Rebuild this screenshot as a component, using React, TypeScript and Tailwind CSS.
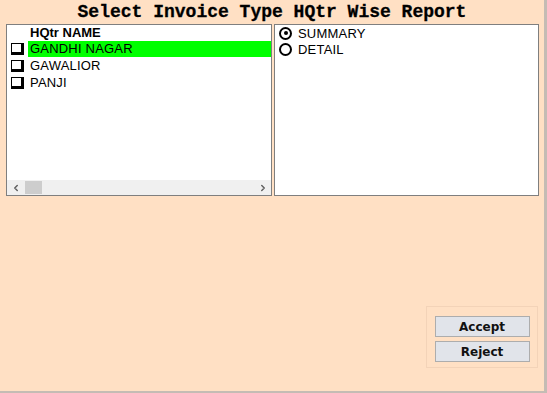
import { ChevronLeft, ChevronRight } from 'lucide-react';

const hqtrs = ['GANDHI NAGAR', 'GAWALIOR', 'PANJI'];

function Check() {
  return (
    <span className="ml-[4px] mr-[4px] box-border h-[12px] w-[13px] shrink-0 border border-b-[3px] border-r-[3px] border-black bg-white" />
  );
}

function Radio({ checked }: { checked: boolean }) {
  return (
    <span className="ml-[4px] mr-[6px] flex h-[13px] w-[13px] shrink-0 items-center justify-center rounded-full border-[2.5px] border-black bg-white">
      {checked && <span className="h-[4px] w-[4px] rounded-full bg-black" />}
    </span>
  );
}

export default function App() {
  return (
    <div className="flex h-[393px] w-[547px] flex-col overflow-hidden border-b-2 border-r-[3px] border-[#c4bcb4] bg-[#ffe0c4] font-['Liberation_Sans',Arial,sans-serif]">
      <h1 className="h-[24px] pt-[1px] text-center font-['Liberation_Mono','Courier_New',monospace] text-[18px] font-bold leading-[22px] text-black [-webkit-text-stroke:0.3px_black]">
        Select Invoice Type HQtr Wise Report
      </h1>
      <div className="flex h-[172px] gap-[2px] pl-[6px]">
        <div className="flex w-[266px] flex-col border border-[#7f7f7f] bg-white">
          <div className="h-[15px] pl-[23px] text-[13px] font-bold leading-[15px] text-black">HQtr NAME</div>
          <div className="flex-1">
            {hqtrs.map((name, i) => (
              <div key={name} className="flex h-[17px] items-center">
                <Check />
                <span
                  className={
                    'flex h-[16px] flex-1 items-center pl-[2px] text-[13px] leading-none tracking-[0.2px] text-black ' +
                    (i === 0 ? 'bg-[#00ff00]' : '')
                  }
                >
                  {name}
                </span>
              </div>
            ))}
          </div>
          <div className="flex h-[15px] items-center bg-[#f0f0f0] pr-[3px]">
            <ChevronLeft className="ml-[4px] h-[10px] w-[10px] text-[#606060]" strokeWidth={3.5} />
            <span className="ml-[4px] h-[13px] w-[17px] bg-[#cdcdcd]" />
            <span className="flex-1" />
            <ChevronRight className="h-[10px] w-[10px] text-[#606060]" strokeWidth={3.5} />
          </div>
        </div>
        <div className="w-[265px] border border-[#7f7f7f] bg-white">
          <div className="flex h-[16px] items-center">
            <Radio checked />
            <span className="text-[13px] leading-none tracking-[0.2px] text-black">SUMMARY</span>
          </div>
          <div className="flex h-[16px] items-center">
            <Radio checked={false} />
            <span className="text-[13px] leading-none tracking-[0.2px] text-black">DETAIL</span>
          </div>
        </div>
      </div>
      <div className="flex flex-1 justify-end pr-[6px] pt-[110px]">
        <div className="flex h-[62px] w-[112px] flex-col items-center gap-[4px] border border-[#f3d3b8] pt-[9px]">
          <button
            type="button"
            className="h-[21px] w-[95px] border border-[#adadad] bg-[#e1e4ea] font-['DejaVu_Sans',sans-serif] text-[12px] font-bold text-[#111]"
          >
            Accept
          </button>
          <button
            type="button"
            className="h-[21px] w-[95px] border border-[#adadad] bg-[#e1e4ea] font-['DejaVu_Sans',sans-serif] text-[12px] font-bold text-[#111]"
          >
            Reject
          </button>
        </div>
      </div>
    </div>
  );
}
